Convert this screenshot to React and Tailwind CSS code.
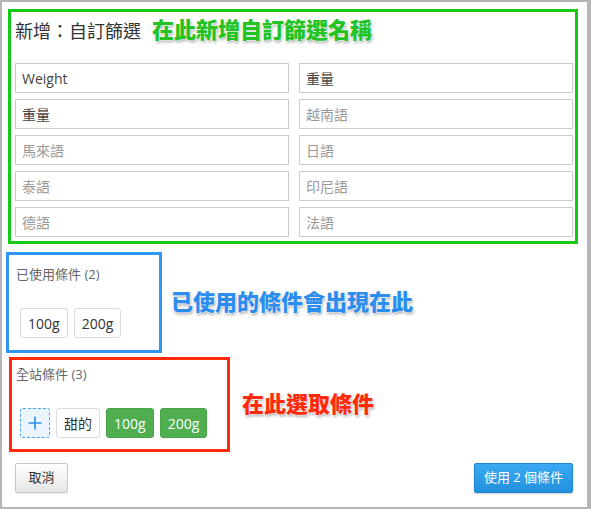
import React from 'react';

const font = { fontFamily: '"Open Sans", "Noto Sans CJK TC", sans-serif' };

const fields = [
  { value: 'Weight' },
  { value: '重量' },
  { value: '重量' },
  { placeholder: '越南語' },
  { placeholder: '馬來語' },
  { placeholder: '日語' },
  { placeholder: '泰語' },
  { placeholder: '印尼語' },
  { placeholder: '德語' },
  { placeholder: '法語' },
];

const Chip = ({ children, active }) => (
  <span
    className={`h-[30px] px-[7px] flex items-center rounded-[3px] text-[14px] border ${
      active
        ? 'bg-[#4fae4f] border-[#47a447] text-white'
        : 'bg-white border-[#dcdcdc] text-[#333]'
    }`}
  >
    {children}
  </span>
);

const Note = ({ color, children }) => (
  <span
    className={`text-[22px] font-black leading-none whitespace-nowrap ${color} [text-shadow:0_0_2px_#fff,0_0_2px_#fff,1px_2px_3px_rgba(0,0,0,0.35)]`}
  >
    {children}
  </span>
);

export default function App() {
  return (
    <div style={font} className="w-[591px] h-[509px] bg-[#b5b5b5] pt-[2px] pl-[2px] pr-[4px] pb-[2px]">
      <div className="w-full h-full bg-white flex flex-col">
        {/* Name fields */}
        <div className="ml-[6px] mt-[7px] w-[570px] border-[3px] border-[#14c814] pl-[4px] pr-[2px] pt-[7px] pb-[4px]">
          <div className="h-[24px] flex items-center">
            <h2 className="text-[18px] text-[#333] leading-[24px]">新增：自訂篩選</h2>
            <span className="ml-[11px]">
              <Note color="text-[#22c322]">在此新增自訂篩選名稱</Note>
            </span>
          </div>
          <div className="mt-[20px] grid grid-cols-2 gap-x-[10px] gap-y-[6px]">
            {fields.map((f, i) => (
              <input
                key={i}
                readOnly
                value={f.value || ''}
                placeholder={f.placeholder}
                className="h-[30px] w-full border border-[#cccccc] px-[6px] text-[14px] text-[#444] placeholder:text-[#999] outline-none"
              />
            ))}
          </div>
        </div>

        {/* Used conditions */}
        <div className="mt-[8px] ml-[4px] flex items-center">
          <div className="w-[156px] border-[3px] border-[#2f95f7] pt-[10px] pb-[12px]">
            <div className="pl-[7px] text-[13px] leading-[18px] text-[#666]">已使用條件 (2)</div>
            <div className="mt-[25px] ml-[11px] flex gap-[6px]">
              <Chip>100g</Chip>
              <Chip>200g</Chip>
            </div>
          </div>
          <span className="ml-[9px]">
            <Note color="text-[#2b8ded]">已使用的條件會出現在此</Note>
          </span>
        </div>

        {/* All conditions */}
        <div className="mt-[4px] ml-[7px] flex items-center">
          <div className="w-[221px] border-[3px] border-[#ff2a0a] pt-[5px] pb-[11px]">
            <div className="pl-[4px] text-[13px] leading-[18px] text-[#666]">全站條件 (3)</div>
            <div className="mt-[25px] ml-[8px] flex gap-[6px]">
              <span className="w-[30px] h-[30px] flex items-center justify-center rounded-[3px] border border-dashed border-[#4aa3f0] bg-[#eaf5ff]">
                <svg width="14" height="14" viewBox="0 0 14 14">
                  <path d="M7 0.5v13M0.5 7h13" stroke="#2b8ded" strokeWidth="1.6" />
                </svg>
              </span>
              <Chip>甜的</Chip>
              <Chip active>100g</Chip>
              <Chip active>200g</Chip>
            </div>
          </div>
          <span className="ml-[12px]">
            <Note color="text-[#ff2a0a]">在此選取條件</Note>
          </span>
        </div>

        {/* Actions */}
        <div className="mt-[11px] pl-[13px] pr-[14px] flex justify-between">
          <button className="h-[30px] w-[53px] rounded-[2px] border border-[#c8c8c8] bg-gradient-to-b from-white to-[#e6e6e6] text-[13px] text-[#333] shadow-[0_1px_1px_rgba(0,0,0,0.08)]">
            取消
          </button>
          <button className="h-[30px] w-[99px] rounded-[2px] border border-[#1f86d0] bg-gradient-to-b from-[#3aa9f2] to-[#2290dd] text-[13px] text-white shadow-[0_1px_2px_rgba(0,0,0,0.2)]">
            使用 2 個條件
          </button>
        </div>
      </div>
    </div>
  );
}
